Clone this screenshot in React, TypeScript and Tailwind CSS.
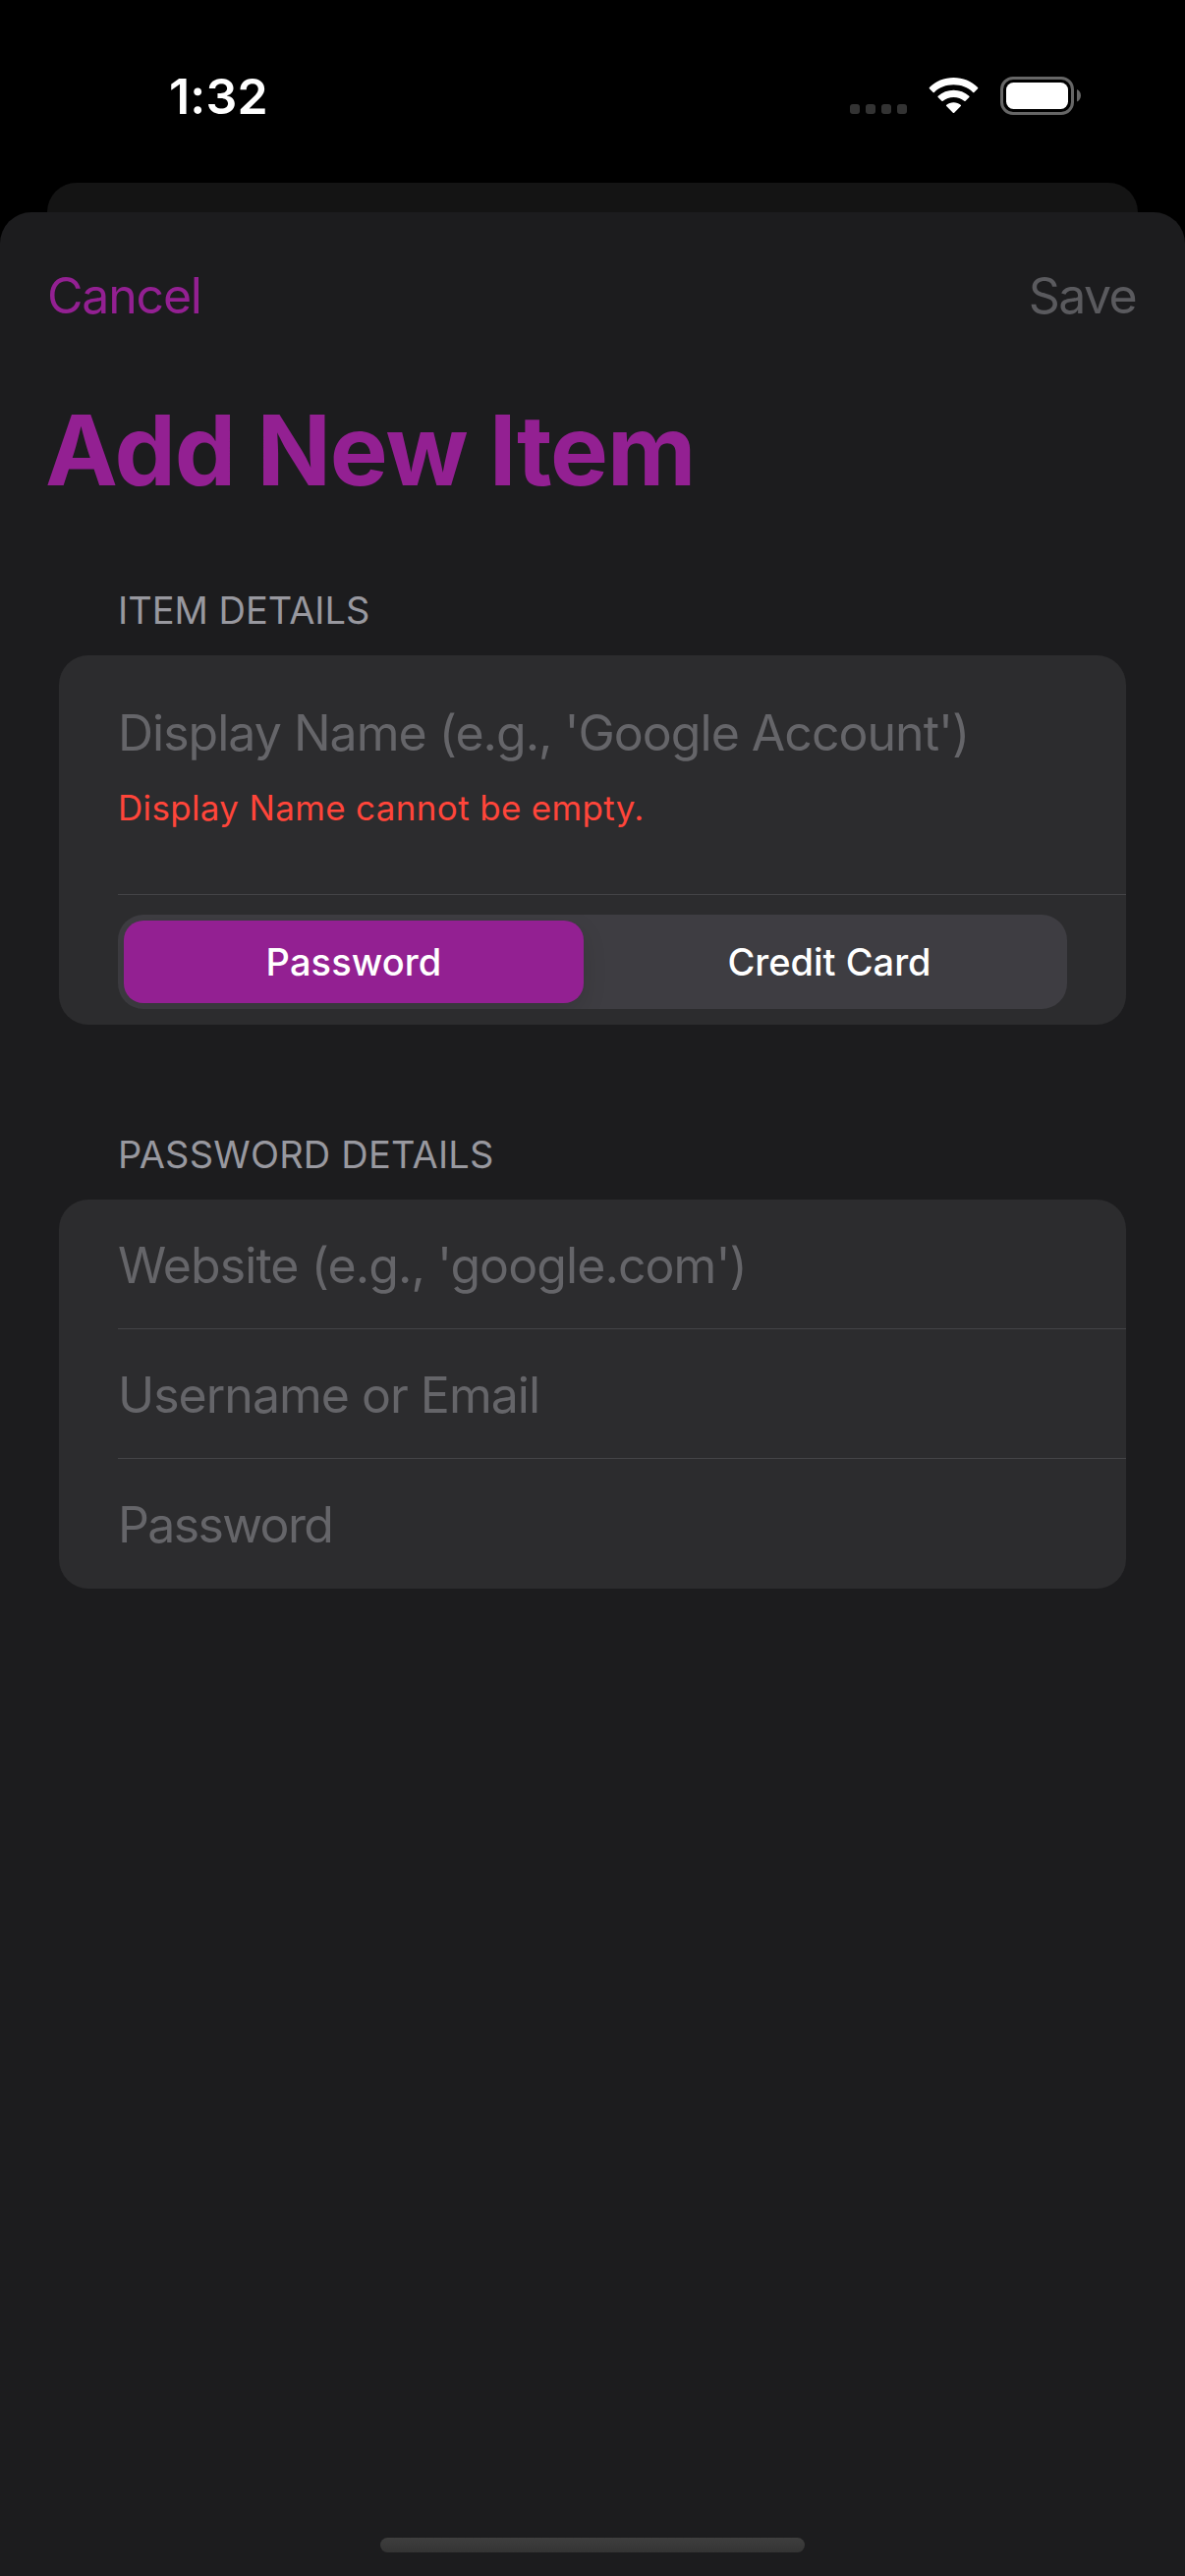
import type { ReactNode } from 'react'

function StatusBar() {
  return (
    <div className="flex h-[186px] items-start justify-between pt-[68px] pr-[106px] pl-[172px]">
      <div className="text-[50px] leading-[60px] font-semibold tracking-[0.2px] text-white">1:32</div>
      <div className="flex pt-[10px]">
        <div className="mt-[28px] mr-[22px] flex gap-1.5">
          <span className="size-[10px] rounded-[3px] bg-[#333333]" />
          <span className="size-[10px] rounded-[3px] bg-[#333333]" />
          <span className="size-[10px] rounded-[3px] bg-[#333333]" />
          <span className="size-[10px] rounded-[3px] bg-[#333333]" />
        </div>
        <svg className="mr-[22px] h-[39px] w-[51px]" viewBox="0 0 51 39" fill="#fff">
          <path d="M25.5 1C16 1 7.300 4.600 0.900 10.900Q0.300 11.600 0.900 12.200L4.600 15.900Q5.200 16.500 5.900 15.900C11 11 18 8.300 25.500 8.300S40 11 45.100 15.900Q45.800 16.500 46.400 15.900L50.100 12.200Q50.700 11.600 50.100 10.900C43.700 4.600 35 1 25.500 1Z" />
          <path d="M25.500 13.700C19.500 13.700 14 15.900 9.700 19.700Q9 20.400 9.600 21L13.400 24.800Q14 25.400 14.700 24.800C17.600 22.300 21.400 20.900 25.500 20.900S33.400 22.300 36.300 24.800Q37 25.400 37.600 24.800L41.400 21Q42 20.400 41.300 19.700C37 15.900 31.500 13.700 25.500 13.700Z" />
          <path d="M25.500 26.300C22.700 26.300 20.200 27.200 18.300 28.700Q17.500 29.400 18.200 30.100L24.800 36.700Q25.500 37.400 26.200 36.700L32.800 30.100Q33.500 29.400 32.700 28.700C30.800 27.200 28.300 26.300 25.500 26.300Z" />
        </svg>
        <svg className="h-[39px] w-[82px]" viewBox="0 0 82 39">
          <rect x="1.500" y="1.500" width="72" height="36" rx="11.500" fill="none" stroke="#666" strokeWidth="3" />
          <rect x="6" y="6" width="63" height="27" rx="7.500" fill="#fff" />
          <path d="M78 13C80.500 14 82 16.500 82 19.300S80.500 24.600 78 25.600Z" fill="#666" />
        </svg>
      </div>
    </div>
  )
}

function SectionHeader({ className, children }: { className: string; children: ReactNode }) {
  return <h2 className={`pl-[120px] text-[38px] leading-[46px] text-[#98989f] ${className}`}>{children}</h2>
}

function Row({ className, children }: { className: string; children: ReactNode }) {
  return (
    <div className="h-[132px] pl-[60px]">
      <div className={`h-full pt-[37px] text-[50px] leading-[60px] whitespace-nowrap text-[#656569] ${className}`}>
        {children}
      </div>
    </div>
  )
}

export default function App() {
  return (
    <div className="flex h-[2622px] w-[1206px] flex-col overflow-hidden bg-black font-['Inter',sans-serif]">
      <StatusBar />
      <div className="mx-[48px] h-[30px] shrink-0 rounded-t-[30px] bg-[#141414]" />
      <main className="flex flex-1 flex-col rounded-t-[32px] bg-[#1c1c1e]">
        <div className="mt-[55px] flex justify-between pr-[50px] pl-[48px] text-[50px] leading-[60px]">
          <button className="tracking-[-1.2px] text-[#932092]">Cancel</button>
          <button className="tracking-[-1.6px] text-[#5a5a5e]">Save</button>
        </div>
        <h1 className="mt-[67px] pl-[46px] text-[99px] leading-[120px] font-bold tracking-[-1.1px] text-[#932092]">
          Add New Item
        </h1>

        <SectionHeader className="mt-[80px] tracking-[0px]">ITEM DETAILS</SectionHeader>
        <section className="mx-[60px] mt-[23px] h-[376px] rounded-[30px] bg-[#2c2c2e] pl-[60px]">
          <div className="h-[244px] border-b border-[#444447] pt-[49px]">
            <div className="text-[50px] leading-[60px] tracking-[-0.99px] whitespace-nowrap text-[#656569]">
              Display Name (e.g., 'Google Account')
            </div>
            <div className="mt-[24px] text-[35px] leading-[44px] tracking-[0.34px] text-[#ff453a]">
              Display Name cannot be empty.
            </div>
          </div>
          <div className="mt-[20px] mr-[60px] flex h-[96px] items-center overflow-hidden rounded-[26px] bg-[#3e3d42] pl-[6px] text-[38px] font-medium text-white">
            <div className="flex h-[84px] w-[468px] items-center justify-center rounded-[20px] bg-[#932092] tracking-[0.1px] shadow-[0_9px_24px_rgba(0,0,0,0.12)]">
              Password
            </div>
            <div className="flex-1 pl-[8px] text-center tracking-[0px]">Credit Card</div>
          </div>
        </section>

        <SectionHeader className="mt-[109px] tracking-[0.2px]">PASSWORD DETAILS</SectionHeader>
        <section className="mx-[60px] mt-[23px] rounded-[30px] bg-[#2c2c2e]">
          <Row className="border-b border-[#444447] tracking-[-0.92px]">Website (e.g., 'google.com')</Row>
          <Row className="border-b border-[#444447] tracking-[-1px]">Username or Email</Row>
          <Row className="tracking-[-1.65px]">Password</Row>
        </section>

        <div className="mx-auto mt-auto mb-[24px] h-[15px] w-[432px] rounded-full bg-linear-to-b from-[#3e3e3e] to-[#343434]" />
      </main>
    </div>
  )
}
